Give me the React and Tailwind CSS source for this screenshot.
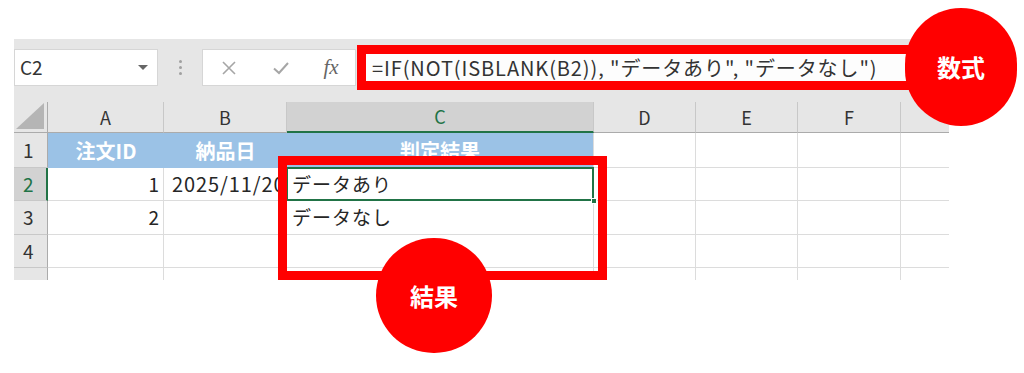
import React from "react";

const F = "font-['Noto_Sans_CJK_JP','Noto_Sans',sans-serif]";

function ColHead({ label, active, last }) {
  return (
    <div
      className={`flex items-center justify-center h-[31px] text-[18px] ${
        active
          ? "bg-[#d2d2d2] text-[#217346] border-b-2 border-b-[#217346]"
          : "bg-[#e6e6e6] text-[#333] border-b border-b-[#ababab]"
      } ${last ? "" : "border-r border-r-[#c8c8c8]"}`}
    >
      {label}
    </div>
  );
}

function RowHead({ n, active, h }) {
  return (
    <div
      className={`flex items-center pl-[9px] text-[19px] overflow-hidden ${h} ${
        active
          ? "bg-[#d2d2d2] text-[#217346] border-r-2 border-r-[#217346]"
          : "bg-[#e6e6e6] text-[#333] border-r border-r-[#ababab]"
      } border-b border-b-[#c8c8c8]`}
    >
      {n}
    </div>
  );
}

function Cell({ children, className = "", h }) {
  return (
    <div
      className={`bg-white border-r border-b border-[#dcdcdc] flex items-center overflow-hidden whitespace-nowrap text-[19px] text-[#262626] ${h} ${className}`}
    >
      {children}
    </div>
  );
}

export default function App() {
  return (
    <div className={`relative w-[1024px] h-[373px] bg-white overflow-hidden ${F}`}>
      <div className="pt-[39px] pl-[14px]">
        <div className="w-[935px] bg-[#e6e6e6]">
          {/* toolbar */}
          <div className="h-[63px] flex items-start pt-[10px]">
            <div className="w-[144px] h-[37px] bg-white border border-[#d6d6d6] flex items-center justify-between pl-[5px] pr-[9px]">
              <span className="text-[19px] text-[#333]">C2</span>
              <svg width="10" height="6" viewBox="0 0 10 6">
                <path d="M0 0 L10 0 L5 5 Z" fill="#666" />
              </svg>
            </div>
            <div className="w-[44px] h-[37px] flex flex-col items-center justify-center gap-[3px]">
              <span className="w-[3px] h-[3px] rounded-full bg-[#a0a0a0]" />
              <span className="w-[3px] h-[3px] rounded-full bg-[#a0a0a0]" />
              <span className="w-[3px] h-[3px] rounded-full bg-[#a0a0a0]" />
            </div>
            <div className="w-[154px] h-[37px] bg-white border border-[#d6d6d6] flex items-center">
              <div className="w-[52px] flex justify-center">
                <svg width="16" height="16" viewBox="0 0 16 16">
                  <path d="M2 2 L14 14 M14 2 L2 14" stroke="#a6a6a6" strokeWidth="1.6" />
                </svg>
              </div>
              <div className="w-[52px] flex justify-center">
                <svg width="18" height="16" viewBox="0 0 18 16">
                  <path d="M2 8.5 L7 13 L16 3" stroke="#a6a6a6" strokeWidth="2" fill="none" />
                </svg>
              </div>
              <div className="w-[48px] flex justify-center">
                <span className="font-['Liberation_Serif',serif] italic text-[21px] text-[#666] leading-none">
                  fx
                </span>
              </div>
            </div>
          </div>

          {/* grid */}
          <div className="grid grid-cols-[34px_116px_123px_307px_102px_102px_103px_48px] h-[178px] overflow-hidden">
            {/* column headers */}
            <div className="h-[31px] bg-[#e6e6e6] border-r border-r-[#ababab] border-b border-b-[#ababab] flex items-end justify-end pr-[3px] pb-[3px]">
              <svg width="28" height="26" viewBox="0 0 28 26">
                <path d="M28 0 L28 26 L0 26 Z" fill="#b5b5b5" />
              </svg>
            </div>
            <ColHead label="A" />
            <ColHead label="B" />
            <ColHead label="C" active />
            <ColHead label="D" />
            <ColHead label="E" />
            <ColHead label="F" />
            <ColHead label="" last />

            {/* row 1 */}
            <RowHead n={1} h="h-[35px]" />
            <div className="h-[35px] bg-[#9bc2e6] flex items-center justify-center text-white font-bold text-[20px]">
              注文ID
            </div>
            <div className="h-[35px] bg-[#9bc2e6] flex items-center justify-center text-white font-bold text-[20px]">
              納品日
            </div>
            <div className="h-[35px] bg-[#9bc2e6] border-r border-[#dcdcdc] flex items-center justify-center text-white font-bold text-[20px]">
              判定結果
            </div>
            <Cell h="h-[35px]" />
            <Cell h="h-[35px]" />
            <Cell h="h-[35px]" />
            <Cell h="h-[35px]" className="border-r-0" />

            {/* row 2 */}
            <RowHead n={2} h="h-[33px]" active />
            <Cell h="h-[33px]" className="justify-end pr-[4px]">1</Cell>
            <Cell h="h-[33px]" className="pl-[8px] text-[20px] tracking-[0.9px]">2025/11/20</Cell>
            <div className="relative h-[33px] bg-white border-r border-b border-[#dcdcdc] flex items-center pl-[5px] text-[19px] tracking-[1px] text-[#262626] whitespace-nowrap">
              データあり
              <div className="absolute -left-[1px] -top-[1px] -right-[1px] -bottom-[1px] border-2 border-[#217346]" />
              <div className="absolute -right-[4px] -bottom-[4px] w-[6px] h-[6px] bg-[#217346] border border-white" />
            </div>
            <Cell h="h-[33px]" />
            <Cell h="h-[33px]" />
            <Cell h="h-[33px]" />
            <Cell h="h-[33px]" className="border-r-0" />

            {/* row 3 */}
            <RowHead n={3} h="h-[34px]" />
            <Cell h="h-[34px]" className="justify-end pr-[4px]">2</Cell>
            <Cell h="h-[34px]" />
            <Cell h="h-[34px]" className="pl-[5px] tracking-[1px]">データなし</Cell>
            <Cell h="h-[34px]" />
            <Cell h="h-[34px]" />
            <Cell h="h-[34px]" />
            <Cell h="h-[34px]" className="border-r-0" />

            {/* row 4 */}
            <RowHead n={4} h="h-[33px]" />
            <Cell h="h-[33px]" />
            <Cell h="h-[33px]" />
            <Cell h="h-[33px]" />
            <Cell h="h-[33px]" />
            <Cell h="h-[33px]" />
            <Cell h="h-[33px]" />
            <Cell h="h-[33px]" className="border-r-0" />

            {/* row 5 */}
            <div className="h-[33px] bg-[#e6e6e6] border-r border-r-[#ababab] pl-[9px] pt-[4px] text-[19px] text-[#333]">5</div>
            <Cell h="h-[33px]" />
            <Cell h="h-[33px]" />
            <Cell h="h-[33px]" />
            <Cell h="h-[33px]" />
            <Cell h="h-[33px]" />
            <Cell h="h-[33px]" />
            <Cell h="h-[33px]" className="border-r-0" />
          </div>
        </div>
      </div>

      {/* formula highlight */}
      <div className="absolute left-[357px] top-[45px] w-[580px] h-[45px] border-[9px] border-[#ff0000] bg-[#fdfdfd] flex items-center pl-[6px] text-[20px] tracking-[0.9px] text-[#333] whitespace-nowrap">
        =IF(NOT(ISBLANK(B2)), "データあり", "データなし")
      </div>
      <div className="absolute left-[905px] top-[8px] w-[112px] h-[118px] rounded-full bg-[#ff0000] flex items-center justify-center text-white font-bold text-[24px]">
        数式
      </div>

      {/* result highlight */}
      <div className="absolute left-[278px] top-[156px] w-[329px] h-[124px] border-[9px] border-[#ff0000]" />
      <div className="absolute left-[376px] top-[238px] w-[116px] h-[115px] rounded-full bg-[#ff0000] flex items-center justify-center text-white font-bold text-[24px]">
        結果
      </div>
    </div>
  );
}
